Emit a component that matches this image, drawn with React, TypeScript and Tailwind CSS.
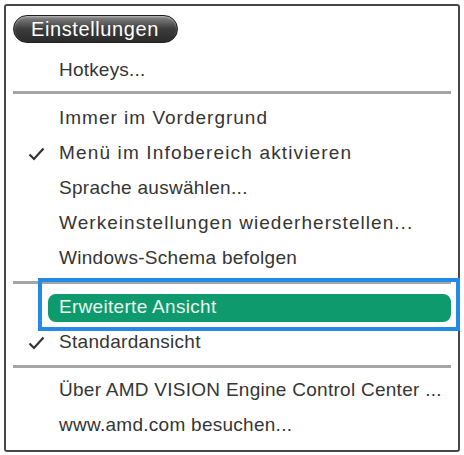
import React from "react";

const font = { fontFamily: '"Liberation Sans", Arial, sans-serif' };

function Row({ label, checked, track }: { label: string; checked?: boolean; track: string }) {
  return (
    <div className="relative flex h-[35px] items-center pl-[53px] text-[19px] text-[#353535]">
      {checked && (
        <svg className="absolute left-[22px] top-[11px]" width="17" height="14" viewBox="0 0 17 14">
          <path d="M1.5 7.5 L6 12 L15.5 1.5" fill="none" stroke="#333" strokeWidth="2.2" strokeLinejoin="miter" />
        </svg>
      )}
      <span className={track}>{label}</span>
    </div>
  );
}

export default function App() {
  return (
    <div className="relative h-[455px] w-[464px] bg-white" style={font}>
      <div className="absolute left-[4px] top-[4px] flex h-[448px] w-[456px] flex-col rounded-[3px] border-2 border-[#474747] bg-white">
        <div className="ml-[7px] mt-[9px] flex h-[28px] w-[165px] items-center rounded-full border border-[#1e1e1e] bg-gradient-to-b from-[#8a8a8a] via-[#3c3c3c] to-[#2a2a2a] pl-[17px] shadow-[inset_0_1px_2px_rgba(255,255,255,0.45)]">
          <span className="text-[20px] leading-none tracking-[0.6px] text-white">Einstellungen</span>
        </div>
        <div className="mt-[10px]">
          <Row label="Hotkeys..." track="tracking-[0.2px]" />
        </div>
        <div className="mx-[7px] mt-[3px] mb-[7px] h-[3px] bg-[#a5a5a5]" />
        <Row label="Immer im Vordergrund" track="tracking-[1px]" />
        <Row label="Menü im Infobereich aktivieren" checked track="tracking-[1.15px]" />
        <Row label="Sprache auswählen..." track="tracking-[0.3px]" />
        <Row label="Werkeinstellungen wiederherstellen..." track="tracking-[1.05px]" />
        <Row label="Windows-Schema befolgen" track="tracking-[0.3px]" />
        <div className="mx-[7px] mt-[5px] mb-[6px] h-[3px] bg-[#a5a5a5]" />
        <div className="flex h-[35px] items-center">
          <div className="ml-[42px] mr-[7px] flex h-[28px] flex-1 items-center rounded-[8px] bg-[#0f9a6d] pl-[11px] text-[19px] tracking-[0.3px] text-[#e8f7f0]">
            Erweiterte Ansicht
          </div>
        </div>
        <Row label="Standardansicht" checked track="tracking-[0.3px]" />
        <div className="mx-[7px] mt-[5px] mb-[5px] h-[3px] bg-[#a5a5a5]" />
        <Row label="Über AMD VISION Engine Control Center ..." track="tracking-[0.27px]" />
        <Row label="www.amd.com besuchen..." track="tracking-[0.27px]" />
      </div>
      <div className="absolute left-[38px] top-[278px] h-[53px] w-[422px] border-[4px] border-[#2589ea]" />
    </div>
  );
}
